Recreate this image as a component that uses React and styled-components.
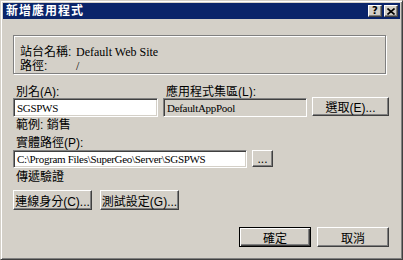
import React from 'react';
import styled, { createGlobalStyle } from 'styled-components';

const GlobalStyle = createGlobalStyle`
  body {
    margin: 0;
    background: #d4d0c8;
  }
`;

const ui = `"Liberation Sans", "Noto Sans CJK TC", sans-serif`;
const serif = `"Liberation Serif", "Noto Sans CJK TC", serif`;

const Window = styled.div`
  width: 403px;
  height: 260px;
  box-sizing: border-box;
  padding: 2px;
  background: #d4d0c8;
  border: 1px solid;
  border-color: #d4d0c8 #404040 #404040 #d4d0c8;
  box-shadow: inset 1px 1px #fff, inset -1px -1px #808080;
  display: flex;
  flex-direction: column;
  font-family: ${ui};
  font-size: 12px;
  color: #000;
`;

const TitleBar = styled.div`
  height: 16px;
  background: #0a246a;
  display: flex;
  align-items: center;
  padding: 0 2px 0 3px;
`;

const Caption = styled.div`
  flex: 1;
  color: #fff;
  font-weight: bold;
  font-size: 12px;
  letter-spacing: 1px;
  line-height: 16px;
`;

const CaptionButton = styled.div`
  width: 14px;
  height: 12px;
  box-sizing: border-box;
  background: #d4d0c8;
  border: 1px solid;
  border-color: #fff #404040 #404040 #fff;
  box-shadow: inset -1px -1px #808080;
  display: flex;
  align-items: center;
  justify-content: center;
  margin-left: ${(p) => p.$gap || 0}px;
  font-family: "DejaVu Sans", sans-serif;
  font-weight: bold;
  font-size: 10px;
  line-height: 10px;
`;

const Content = styled.div`
  flex: 1;
  padding: 16px 11px 0 10px;
  display: flex;
  flex-direction: column;
`;

const InfoBox = styled.div`
  width: 373px;
  height: 39px;
  box-sizing: border-box;
  border: 1px solid #808080;
  box-shadow: inset 1px 1px #fff, 1px 1px #fff;
  padding: 9px 0 0 6px;
`;

const InfoRow = styled.div`
  display: flex;
  height: 14px;
  line-height: 14px;
`;

const InfoLabel = styled.span`
  width: 56px;
`;

const InfoValue = styled.span`
  font-family: ${serif};
  font-size: 12px;
`;

const FormGrid = styled.div`
  margin-top: 12px;
  display: grid;
  grid-template-columns: 145px 144px 77px;
  column-gap: 5px;
  align-items: start;
`;

const Label = styled.div`
  height: 12px;
  line-height: 12px;
  padding-left: 3px;
  margin-top: ${(p) => p.$top || 0}px;
  white-space: nowrap;
`;

const Field = styled.div`
  height: ${(p) => p.$h || 19}px;
  width: ${(p) => (p.$w ? `${p.$w}px` : 'auto')};
  box-sizing: border-box;
  background: ${(p) => (p.$readOnly ? '#d4d0c8' : '#fff')};
  border: 1px solid;
  border-color: #808080 #fff #fff #808080;
  box-shadow: inset 1px 1px #404040, inset -1px -1px #d4d0c8;
  padding: 0 3px;
  display: flex;
  align-items: center;
  font-family: ${serif};
  font-size: 11px;
  letter-spacing: -0.3px;
  white-space: nowrap;
  overflow: hidden;
`;

const Button = styled.div`
  width: ${(p) => p.$w}px;
  height: ${(p) => p.$h || 20}px;
  box-sizing: border-box;
  background: #d4d0c8;
  border: 1px solid;
  border-color: ${(p) => (p.$default ? '#000' : '#fff #404040 #404040 #fff')};
  box-shadow: ${(p) =>
    p.$default
      ? 'inset 1px 1px #fff, inset -1px -1px #404040, inset -2px -2px #808080'
      : 'inset -1px -1px #808080'};
  display: flex;
  align-items: center;
  justify-content: center;
  margin-top: ${(p) => p.$top || 0}px;
  white-space: nowrap;
`;

const PathRow = styled.div`
  display: flex;
  gap: 5px;
  margin-top: 1px;
`;

const ButtonRow = styled.div`
  display: flex;
  gap: ${(p) => p.$gap}px;
  margin-top: ${(p) => p.$top}px;
  justify-content: ${(p) => (p.$end ? 'flex-end' : 'flex-start')};
`;

export default function App() {
  return (
    <>
      <GlobalStyle />
      <Window>
        <TitleBar>
          <Caption>新增應用程式</Caption>
          <CaptionButton>?</CaptionButton>
          <CaptionButton $gap={2}>
            <svg width="8" height="7" viewBox="0 0 8 7">
              <path d="M0.5 0.5 L7.5 6.5 M7.5 0.5 L0.5 6.5" stroke="#000" strokeWidth="1.6" />
            </svg>
          </CaptionButton>
        </TitleBar>
        <Content>
          <InfoBox>
            <InfoRow>
              <InfoLabel>站台名稱:</InfoLabel>
              <InfoValue>Default Web Site</InfoValue>
            </InfoRow>
            <InfoRow>
              <InfoLabel>路徑:</InfoLabel>
              <InfoValue>/</InfoValue>
            </InfoRow>
          </InfoBox>

          <FormGrid>
            <Label>別名(A):</Label>
            <Label>應用程式集區(L):</Label>
            <div />
            <Field>SGSPWS</Field>
            <Field $readOnly>DefaultAppPool</Field>
            <Button $w={77} $h={19} $top={-1}>選取(E)...</Button>
          </FormGrid>

          <Label $top={2}>範例: 銷售</Label>
          <Label $top={6}>實體路徑(P):</Label>
          <PathRow>
            <Field $w={234} $h={18}>C:\Program Files\SuperGeo\Server\SGSPWS</Field>
            <Button $w={21} $h={17}>...</Button>
          </PathRow>
          <Label $top={3}>傳遞驗證</Label>

          <ButtonRow $gap={8} $top={7}>
            <Button $w={79}>連線身分(C)...</Button>
            <Button $w={79}>測試設定(G)...</Button>
          </ButtonRow>

          <ButtonRow $gap={6} $top={17} $end>
            <Button $w={72} $default>確定</Button>
            <Button $w={72}>取消</Button>
          </ButtonRow>
        </Content>
      </Window>
    </>
  );
}
